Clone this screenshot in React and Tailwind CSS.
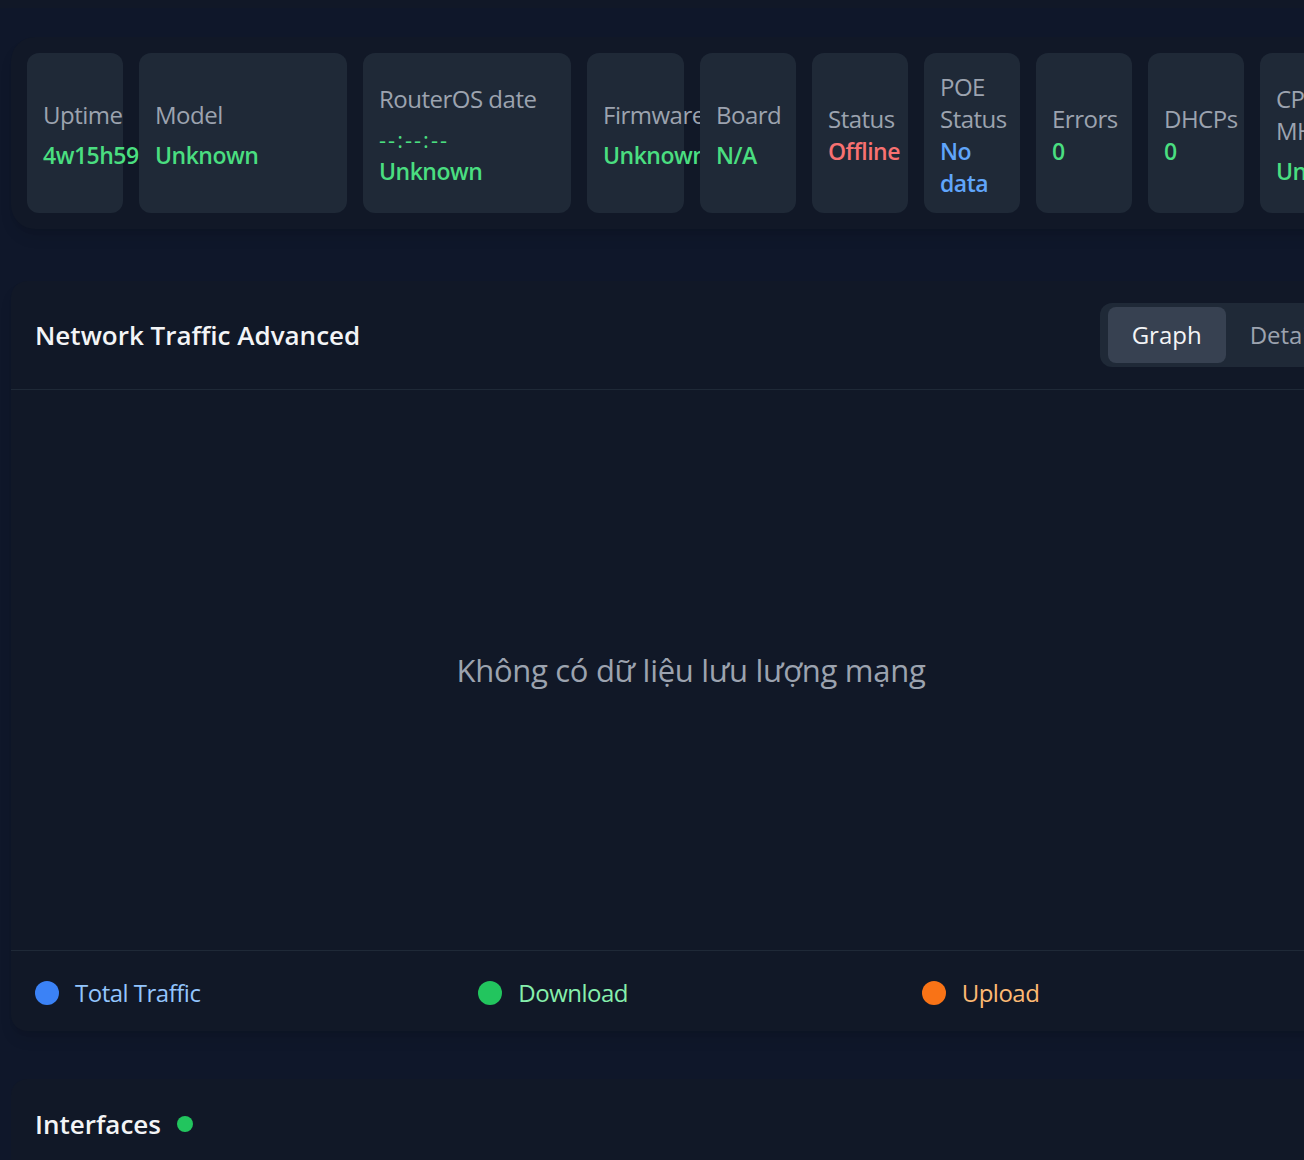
import React from 'react';

const FONT = { fontFamily: '"Open Sans", "Noto Sans", sans-serif' };

const stats = [
  { label: 'Uptime', value: '4w15h59', width: 'w-24', gap: true },
  { label: 'Model', value: 'Unknown', width: 'w-[208px]', gap: true },
  { label: 'RouterOS date', value: 'Unknown', time: '--:--:--', width: 'w-[208px]', gap: true },
  { label: 'Firmware', value: 'Unknown', width: 'w-[97px]', gap: true },
  { label: 'Board', value: 'N/A', width: 'w-24', gap: true },
  { label: 'Status', value: 'Offline', width: 'w-24', color: 'text-[#f87171]' },
  { label: 'POE Status', value: 'No data', width: 'w-24', color: 'text-[#60a5fa]' },
  { label: 'Errors', value: '0', width: 'w-24' },
  { label: 'DHCPs', value: '0', width: 'w-24' },
  { label: 'CPU MHz', value: 'Unknown', width: 'w-24', gap: true },
];

const StatCard = ({ label, value, time, width, color = 'text-[#4ade80]', gap }) => (
  <div className={`relative ${width} shrink-0 bg-[#1f2937] rounded-xl px-4 pt-[18px] pb-[14px] flex flex-col justify-center`}>
    <div className="text-2xl tracking-[-0.5px] text-[#9ca3af]">{label}</div>
    {time && <div className={`mt-2 text-[22px] leading-8 tracking-[2px] ${color}`}>{time}</div>}
    <div className={`${gap && !time ? 'mt-2' : ''} text-[23px] leading-8 tracking-[-0.5px] font-semibold ${color}`}>{value}</div>
  </div>
);

const legend = [
  { name: 'Total Traffic', dot: 'bg-[#3b82f6]', text: 'text-[#93c5fd]' },
  { name: 'Download', dot: 'bg-[#22c55e]', text: 'text-[#86efac]' },
  { name: 'Upload', dot: 'bg-[#f97316]', text: 'text-[#fdba74]' },
];

export default function App() {
  return (
    <div className="w-[1304px] h-[1160px] overflow-hidden bg-[#0f172a]" style={FONT}>
      <div className="h-2 bg-[#111827]" />
      <div className="w-[1382px] pl-[11px] pt-[29px]">
        {/* stats strip */}
        <div className="flex gap-4 p-4 rounded-3xl bg-[#111827] shadow-lg">
          {stats.map((s) => (
            <StatCard key={s.label} {...s} />
          ))}
        </div>

        {/* traffic panel */}
        <div className="mt-[52px] w-[1360px] rounded-2xl bg-[#111827] shadow-lg">
          <div className="flex items-center justify-between pl-6 pr-[13px] py-[22px] border-b border-[#1f2937]">
            <h2 className="text-[26px] font-semibold text-[#f3f4f6]">Network Traffic Advanced</h2>
            <div className="flex px-2 py-1 rounded-xl bg-[#1f2937]">
              <button className="h-14 px-6 rounded-lg bg-[#374151] text-2xl text-[#f3f4f6]">Graph</button>
              <button className="h-14 px-6 rounded-lg text-2xl text-[#9ca3af]">Details</button>
            </div>
          </div>
          <div className="h-[561px] flex items-center justify-center border-b border-[#1f2937]">
            <p className="text-[31px] tracking-[-0.3px] text-[#9ca3af]">Không có dữ liệu lưu lượng mạng</p>
          </div>
          <div className="grid grid-cols-3 gap-[18px] px-6 pt-[26px] pb-[22px]">
            {legend.map((l) => (
              <div key={l.name} className="flex items-center gap-4">
                <span className={`w-6 h-6 rounded-full ${l.dot}`} />
                <span className={`text-2xl tracking-[-0.5px] ${l.text}`}>{l.name}</span>
              </div>
            ))}
          </div>
        </div>

        {/* interfaces */}
        <div className="mt-12 w-[1360px] h-[200px] rounded-2xl bg-[#111827] px-6 pt-[29px]">
          <div className="flex items-center gap-4">
            <h2 className="text-[26px] leading-8 font-semibold text-[#f3f4f6]">Interfaces</h2>
            <span className="w-4 h-4 rounded-full bg-[#22c55e]" />
          </div>
        </div>
      </div>
    </div>
  );
}
